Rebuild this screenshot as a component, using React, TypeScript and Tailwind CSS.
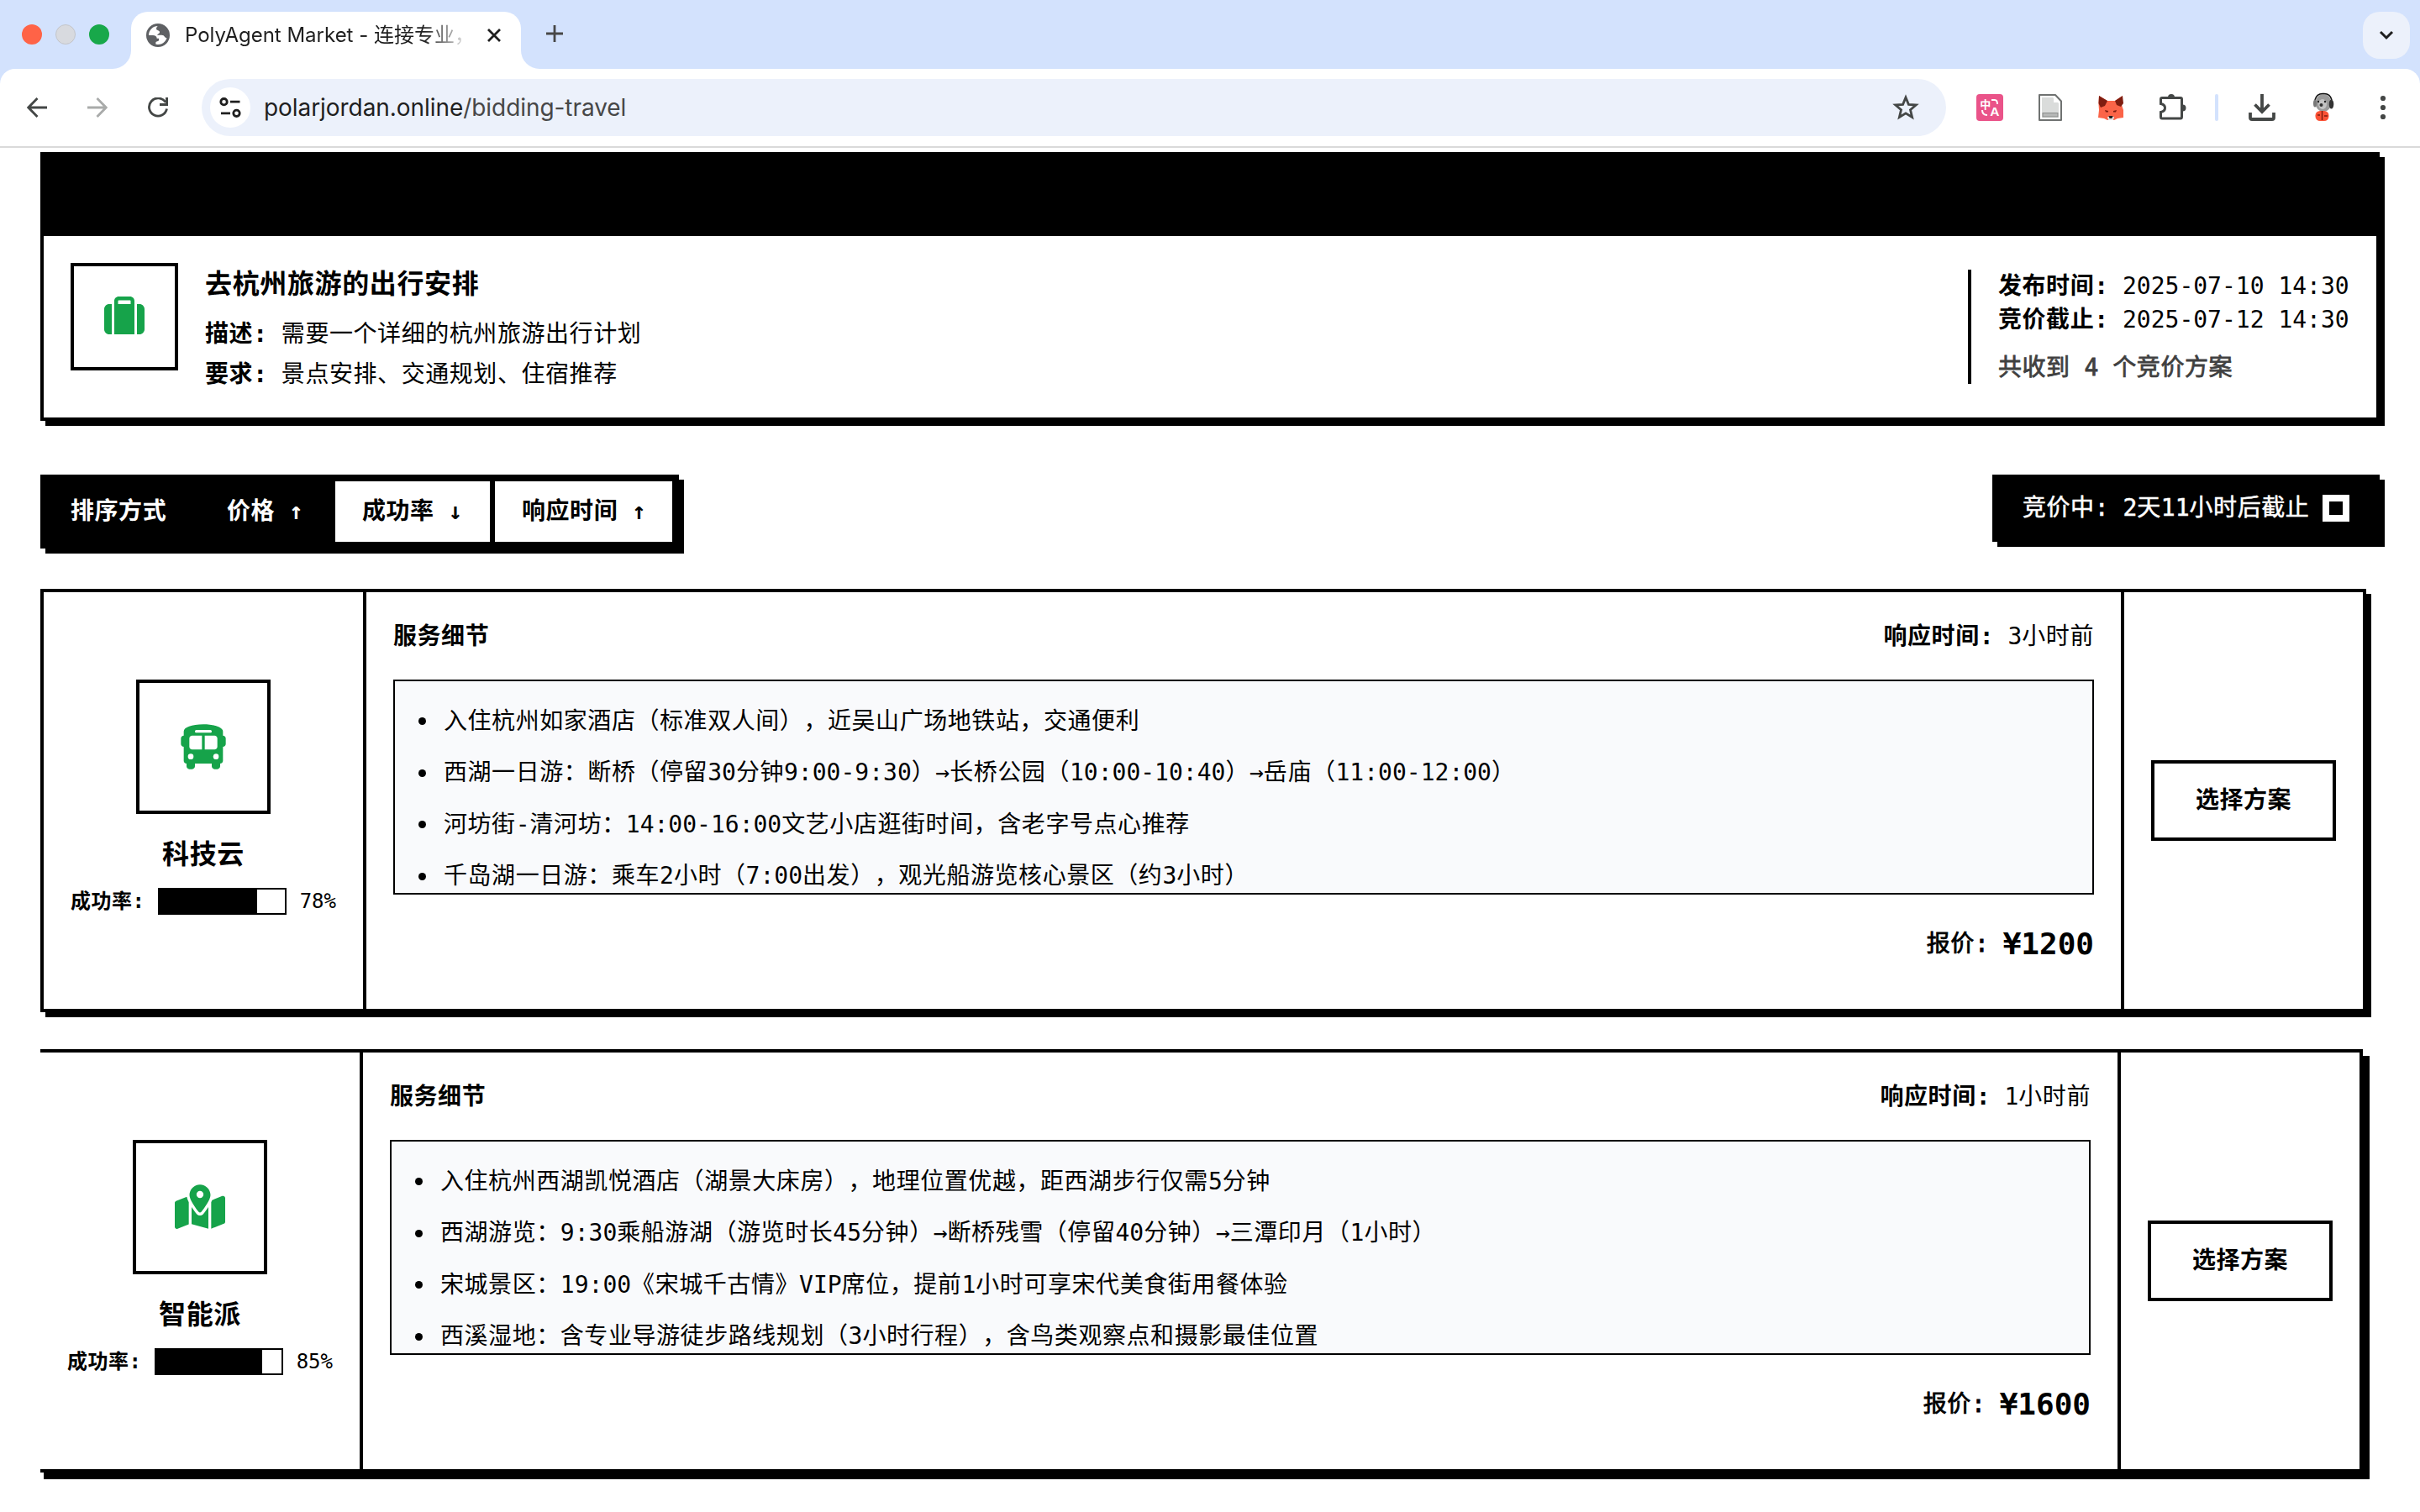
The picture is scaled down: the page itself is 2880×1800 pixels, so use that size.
import { FaBus, FaMapLocationDot, FaSuitcase } from 'react-icons/fa6';
import type { IconType } from 'react-icons';

type Bid = {
  name: string;
  icon: IconType;
  rate: number;
  responded: string;
  price: string;
  details: string[];
  active?: boolean;
};

const bids: Bid[] = [
  {
    name: '科技云',
    icon: FaBus,
    rate: 78,
    responded: '3小时前',
    price: '¥1200',
    details: [
      '入住杭州如家酒店（标准双人间），近吴山广场地铁站，交通便利',
      '西湖一日游：断桥（停留30分钟9:00-9:30）→长桥公园（10:00-10:40）→岳庙（11:00-12:00）',
      '河坊街-清河坊：14:00-16:00文艺小店逛街时间，含老字号点心推荐',
      '千岛湖一日游：乘车2小时（7:00出发），观光船游览核心景区（约3小时）',
    ],
  },
  {
    name: '智能派',
    icon: FaMapLocationDot,
    rate: 85,
    responded: '1小时前',
    price: '¥1600',
    active: true,
    details: [
      '入住杭州西湖凯悦酒店（湖景大床房），地理位置优越，距西湖步行仅需5分钟',
      '西湖游览：9:30乘船游湖（游览时长45分钟）→断桥残雪（停留40分钟）→三潭印月（1小时）',
      '宋城景区：19:00《宋城千古情》VIP席位，提前1小时可享宋代美食街用餐体验',
      '西溪湿地：含专业导游徒步路线规划（3小时行程），含鸟类观察点和摄影最佳位置',
    ],
  },
];

// Latin runs keep the mono advance, Chinese runs are spaced a little wider
function Mixed({ children }: { children: string }) {
  const runs = children.split(/([\x20-\x7e¥→↑↓]+)/).filter(Boolean);
  return (
    <span className="whitespace-pre">
      {runs.map((run, i) =>
        /^[\x20-\x7e¥→↑↓]/.test(run) ? (
          <span key={i}>{run}</span>
        ) : (
          <span key={i} className="tracking-[0.02em]">{run}</span>
        )
      )}
    </span>
  );
}

function TabStrip() {
  return (
    <div className="flex h-[82px] bg-[#d3e2fd]">
      <div className="flex items-center gap-4 pl-[26px] w-[134px] shrink-0">
        <div className="w-6 h-6 rounded-full bg-[#ff6347]"></div>
        <div className="w-6 h-6 rounded-full bg-[#d8dadf] border border-[#c3c5ca]"></div>
        <div className="w-6 h-6 rounded-full bg-[#18a84a]"></div>
      </div>
      <svg className="w-[22px] h-[22px] self-end shrink-0" viewBox="0 0 22 22">
        <path d="M0 22A22 22 0 0 0 22 0V22Z" fill="#fff" />
      </svg>
      <div className="flex items-center w-[464px] h-[68px] mt-3.5 bg-white rounded-t-[20px] pb-3 shrink-0">
        <svg className="w-7 h-7 ml-[18px] shrink-0" viewBox="0 0 84 84">
          <circle cx="42" cy="42" r="37.5" fill="#fff" stroke="#5f6164" strokeWidth="9" />
          <path d="M44 4C42 10 36 12 36 19C36 25 48 24 48 31C48 37 40 37 40 42C46 42 60 40 64 45C67 49 71 55 79 50C83 30 68 8 44 4Z" fill="#5f6164" />
          <path d="M4 42H24C32 42 38 46 38 53H45V60C45 64 34 63 34 69V80C16 77 4 62 4 42Z" fill="#5f6164" />
        </svg>
        <div className="ml-[18px] w-[344px] whitespace-nowrap text-[24px] leading-[34px] text-[#1f1f1f] font-['Inter','Noto_Sans_CJK_SC',sans-serif] [mask-image:linear-gradient(to_right,#000_285px,transparent_340px)]">
          PolyAgent Market - 连接专业，
        </div>
        <svg className="w-4 h-4 ml-4 shrink-0" viewBox="0 0 16 16">
          <path d="M1 1L15 15M15 1L1 15" stroke="#1f1f1f" strokeWidth="2.8" />
        </svg>
      </div>
      <svg className="w-[22px] h-[22px] self-end shrink-0" viewBox="0 0 22 22">
        <path d="M22 22A22 22 0 0 1 0 0V22Z" fill="#fff" />
      </svg>
      <svg className="w-5 h-5 mt-[30px] ml-2" viewBox="0 0 20 20">
        <path d="M10 0V20M0 10H20" stroke="#474747" strokeWidth="2.8" />
      </svg>
      <div className="ml-auto mr-3 mt-3.5 w-14 h-14 rounded-[20px] bg-[#ecf1fb] flex items-center justify-center">
        <svg className="w-[18px] h-[12px]" viewBox="0 0 18 12">
          <path d="M2 2L9 9L16 2" fill="none" stroke="#1f1f1f" strokeWidth="3" />
        </svg>
      </div>
    </div>
  );
}

function Toolbar() {
  return (
    <div className="bg-[#d3e2fd]">
      <div className="flex items-center h-[94px] bg-white rounded-t-[18px] border-b-2 border-[#dadada]">
        <svg className="w-6 h-6 ml-8 shrink-0" viewBox="0 0 24 24">
          <path d="M24 12H2.5M12.5 1L1.8 12L12.5 23" fill="none" stroke="#444746" strokeWidth="2.8" />
        </svg>
        <svg className="w-6 h-6 ml-12 shrink-0" viewBox="0 0 24 24">
          <path d="M0 12H21.5M11.5 1L22.2 12L11.5 23" fill="none" stroke="#a9abaa" strokeWidth="2.8" />
        </svg>
        <svg className="w-6 h-6 ml-12 shrink-0" viewBox="0 0 24 24">
          <path d="M21 5.8A10.6 10.6 0 1 0 22.5 13.5" fill="none" stroke="#444746" strokeWidth="2.8" />
          <path d="M22.5 0V8.6H14" fill="none" stroke="#444746" strokeWidth="3" />
        </svg>
        <div className="flex items-center w-[2076px] h-[68px] ml-10 rounded-full bg-[#ecf1fb] shrink-0">
          <div className="ml-2.5 w-12 h-12 rounded-full bg-white flex items-center justify-center">
            <svg className="w-[26px] h-6" viewBox="0 0 26 24">
              <g fill="none" stroke="#1f1f1f" strokeWidth="2.8">
                <circle cx="5.5" cy="5.2" r="3.7" />
                <path d="M13 5.2H24.5M2 18.8H13" />
                <circle cx="20.5" cy="18.8" r="3.7" />
              </g>
            </svg>
          </div>
          <span className="ml-4 text-[28px] tracking-[-0.06px] font-['Inter',sans-serif] text-[#1f1f1f] whitespace-nowrap">
            polarjordan.online<span className="text-[#474747]">/bidding-travel</span>
          </span>
          <svg className="w-8 h-8 ml-auto mr-8" viewBox="0 0 32 32">
            <path d="M16 4L19.4 12.3L28.3 13L21.5 18.8L23.6 27.5L16 22.8L8.4 27.5L10.5 18.8L3.7 13L12.6 12.3Z" fill="none" stroke="#444746" strokeWidth="2.8" />
          </svg>
        </div>
        <svg className="w-8 h-8 ml-9 shrink-0" viewBox="0 0 32 32">
          <rect width="32" height="32" rx="4" fill="#ea5389" />
          <text x="4.2" y="16.5" fontSize="13" fontWeight="700" fill="#fff" fontFamily="Noto Sans CJK SC">中</text>
          <text x="16.2" y="26" fontSize="15.5" fontWeight="700" fill="#fff" fontFamily="Liberation Sans">A</text>
          <path d="M18 7H22Q25 7 25 12M7 19Q7 25 13 25" fill="none" stroke="#fff" strokeWidth="2" />
        </svg>
        <svg className="w-7 h-8 ml-[42px] shrink-0" viewBox="0 0 28 32">
          <path d="M1 1H20L27 8.5V31H1Z" fill="#fff" stroke="#6f7271" strokeWidth="2" strokeLinejoin="round" />
          <path d="M4 4H17L24 11V28H4Z" fill="#dadcdb" />
          <path d="M18 2.5V10H26Z" fill="#fff" />
          <rect x="5" y="22.5" width="18" height="4.5" fill="#b5b7b6" stroke="#8b8d8c" />
        </svg>
        <svg className="w-8 h-8 ml-[42px] shrink-0" viewBox="0 0 32 32">
          <path d="M2 2L12 8H21L30 2L29 13L31 19V28L24 29L20 31H12L8 29L1 28L2 19L1.5 12Z" fill="#fb6448" />
          <path d="M2 2L12 8L9 14L4 16L1.5 11ZM30 2L21 8L23 13L28 15L31 11Z" fill="#7f1d10" />
          <path d="M9 19L13 20V21.5H10ZM23 19L19 20V21.5H22Z" fill="#7f1d10" />
          <path d="M12 27H20L19 31H13Z" fill="#e4e4e4" />
          <path d="M13.5 26H18.5L17.5 29H14.5Z" fill="#222" />
        </svg>
        <svg className="w-8 h-8 ml-[42px] shrink-0" viewBox="0 0 32 32">
          <path d="M3 4.5H25Q26.5 4.5 26.5 6V27Q26.5 29 25 29H3Q1.5 29 1.5 27V21.5Q6.5 20.5 6.5 16.5Q6.5 12.5 1.5 11.5V6Q1.5 4.5 3 4.5Z" fill="none" stroke="#444746" strokeWidth="3" />
          <path d="M10 4A4 4 0 0 1 18 4ZM27.5 12.5A4 4 0 0 1 27.5 20.5Z" fill="#444746" />
        </svg>
        <div className="w-1 h-8 ml-[34px] rounded-full bg-[#d3e2fd] shrink-0"></div>
        <svg className="w-8 h-8 ml-9 shrink-0" viewBox="0 0 32 32">
          <path d="M16 0V21M7.5 12.5L16 21L24.5 12.5" fill="none" stroke="#444746" strokeWidth="3.8" />
          <path d="M2 22V28Q2 30 4 30H28Q30 30 30 28V22" fill="none" stroke="#444746" strokeWidth="3.8" />
        </svg>
        {/* Profile picture: dog with headphones */}
        <svg className="w-[26px] h-9 ml-11 shrink-0" viewBox="0 0 26 36">
          <ellipse cx="13" cy="12.5" rx="9.5" ry="10.5" fill="#9b9b9b" />
          <ellipse cx="12" cy="14" rx="5" ry="6" fill="#c4c4c4" />
          <path d="M3 9Q5 1 13 1.5Q21 1 23 9" fill="none" stroke="#111" strokeWidth="1.6" />
          <ellipse cx="22.5" cy="14" rx="2.8" ry="5.5" fill="#333" />
          <ellipse cx="3" cy="13" rx="2" ry="4.5" fill="#777" />
          <circle cx="10.5" cy="15" r="2" fill="#333" />
          <circle cx="7" cy="11" r="1.2" fill="#222" />
          <circle cx="15" cy="11" r="1.2" fill="#222" />
          <rect x="3.5" y="22" width="16" height="12" rx="5.5" fill="#fb5236" />
          <path d="M11.5 22V33M6 27H9M14 28H18" stroke="#7f1d10" strokeWidth="1.5" />
        </svg>
        <svg className="w-8 h-8 ml-[42px] shrink-0" viewBox="0 0 32 32">
          <circle cx="16" cy="5" r="3.1" fill="#444746" />
          <circle cx="16" cy="16" r="3.1" fill="#444746" />
          <circle cx="16" cy="27" r="3.1" fill="#444746" />
        </svg>
      </div>
    </div>
  );
}

function TaskSummary() {
  return (
    <section className="w-[2784px] h-[320px] border-4 border-black bg-white shadow-[6px_6px_0_0_#000]">
      <div className="h-24 bg-black"></div>
      <div className="flex h-[216px] px-8">
        <div className="w-32 h-32 mt-8 border-4 border-black flex items-center justify-center">
          <FaSuitcase className="w-12 h-12 text-[#16a34a]" />
        </div>
        <div className="ml-8 pt-[33px]">
          <h2 className="text-[32px] leading-[48px] font-bold"><Mixed>去杭州旅游的出行安排</Mixed></h2>
          <p className="mt-3 leading-[48px]"><b><Mixed>描述:</Mixed></b> <Mixed>需要一个详细的杭州旅游出行计划</Mixed></p>
          <p className="leading-[48px]"><b><Mixed>要求:</Mixed></b> <Mixed>景点安排、交通规划、住宿推荐</Mixed></p>
        </div>
        <div className="ml-auto self-center w-[454px] h-[136px] border-l-4 border-black pl-8 whitespace-nowrap">
          <p className="leading-10"><b><Mixed>发布时间:</Mixed></b> 2025-07-10 14:30</p>
          <p className="leading-10"><b><Mixed>竞价截止:</Mixed></b> 2025-07-12 14:30</p>
          <p className="leading-10 mt-[17px] text-[#404040] [-webkit-text-stroke:0.8px]"><Mixed>共收到 4 个竞价方案</Mixed></p>
        </div>
      </div>
    </section>
  );
}

function SortBar() {
  return (
    <div className="flex justify-between w-[2784px] mt-16">
      <div className="flex gap-1.5 p-2 w-[760px] h-[88px] bg-black shadow-[6px_6px_0_0_#000] font-bold leading-[72px]">
        <span className="w-[176px] pl-7 text-white"><Mixed>排序方式</Mixed></span>
        <button className="w-[155px] pl-8 text-left text-white bg-black"><Mixed>价格 ↑</Mixed></button>
        <button className="w-[184px] pl-8 text-left bg-white"><Mixed>成功率 ↓</Mixed></button>
        <button className="w-[211px] pl-8 text-left bg-white"><Mixed>响应时间 ↑</Mixed></button>
      </div>
      <div className="flex items-center gap-4 w-[461px] h-20 pl-9 bg-black text-white shadow-[6px_6px_0_0_#000]">
        <span className="w-[341px] leading-8 [-webkit-text-stroke:0.5px]"><Mixed>竞价中: 2天11小时后截止</Mixed></span>
        <div className="w-8 h-8 border-8 border-white"></div>
      </div>
    </div>
  );
}

function BidCard({ bid }: { bid: Bid }) {
  const Icon = bid.icon;
  return (
    <article
      className={
        bid.active
          ? 'flex w-[2768px] h-[504px] border-4 border-black bg-white shadow-[8px_8px_0_0_#000] -translate-x-1 -translate-y-1'
          : 'flex w-[2768px] h-[504px] border-4 border-black bg-white shadow-[6px_6px_0_0_#000]'
      }
    >
      {/* Agent */}
      <div className="w-[384px] border-r-4 border-black px-8 pt-[104px] flex flex-col items-center shrink-0">
        <div className="w-40 h-40 border-4 border-black flex items-center justify-center">
          <Icon className="h-[60px] w-auto text-[#16a34a]" />
        </div>
        <h3 className="mt-6 text-[32px] leading-[48px] font-bold"><Mixed>{bid.name}</Mixed></h3>
        <div className="mt-4 flex items-center w-full h-8 text-[24px] whitespace-nowrap">
          <b className="w-[104px]"><Mixed>成功率:</Mixed></b>
          <div className="w-[153px] h-8 border-2 border-black">
            <div className="h-full bg-black" style={{ width: `${bid.rate}%` }}></div>
          </div>
          <span className="ml-4">{bid.rate}%</span>
        </div>
      </div>

      {/* Details */}
      <div className="w-[2092px] border-r-4 border-black px-8 pt-[33px] shrink-0">
        <div className="flex justify-between leading-10">
          <b><Mixed>服务细节</Mixed></b>
          <span className="whitespace-nowrap"><b><Mixed>响应时间:</Mixed></b> <Mixed>{bid.responded}</Mixed></span>
        </div>
        <ul className="mt-[31px] h-64 w-[2024px] overflow-hidden border-2 border-black bg-[#f9fafc] pt-[25px] pl-7 [text-spacing-trim:space-all]">
          {bid.details.map((line) => (
            <li key={line} className="flex items-center h-[45.5px] mb-4">
              <span className="w-[9px] h-[9px] rounded-full bg-black mr-[21px]"></span>
              <Mixed>{line}</Mixed>
            </li>
          ))}
        </ul>
        <div className="mt-[35px] flex justify-end items-center leading-[48px]">
          <span className="[-webkit-text-stroke:0.8px]"><Mixed>报价: </Mixed></span>
          <span className="text-[36px] font-bold">{bid.price}</span>
        </div>
      </div>

      <div className="flex-1 flex items-center justify-center">
        <button className="w-[220px] h-24 border-4 border-black font-bold"><Mixed>选择方案</Mixed></button>
      </div>
    </article>
  );
}

export default function App() {
  return (
    <div className="w-[2880px] h-[1800px] overflow-hidden bg-white">
      <TabStrip />
      <Toolbar />
      <main className="px-12 pt-[5px] text-[28px] text-black font-['DejaVu_Sans_Mono','Noto_Sans_CJK_SC',monospace]">
        <TaskSummary />
        <SortBar />
        <div className="mt-12 flex flex-col gap-12 overflow-hidden pb-4">
          {bids.map((bid) => (
            <BidCard key={bid.name} bid={bid} />
          ))}
        </div>
      </main>
    </div>
  );
}
